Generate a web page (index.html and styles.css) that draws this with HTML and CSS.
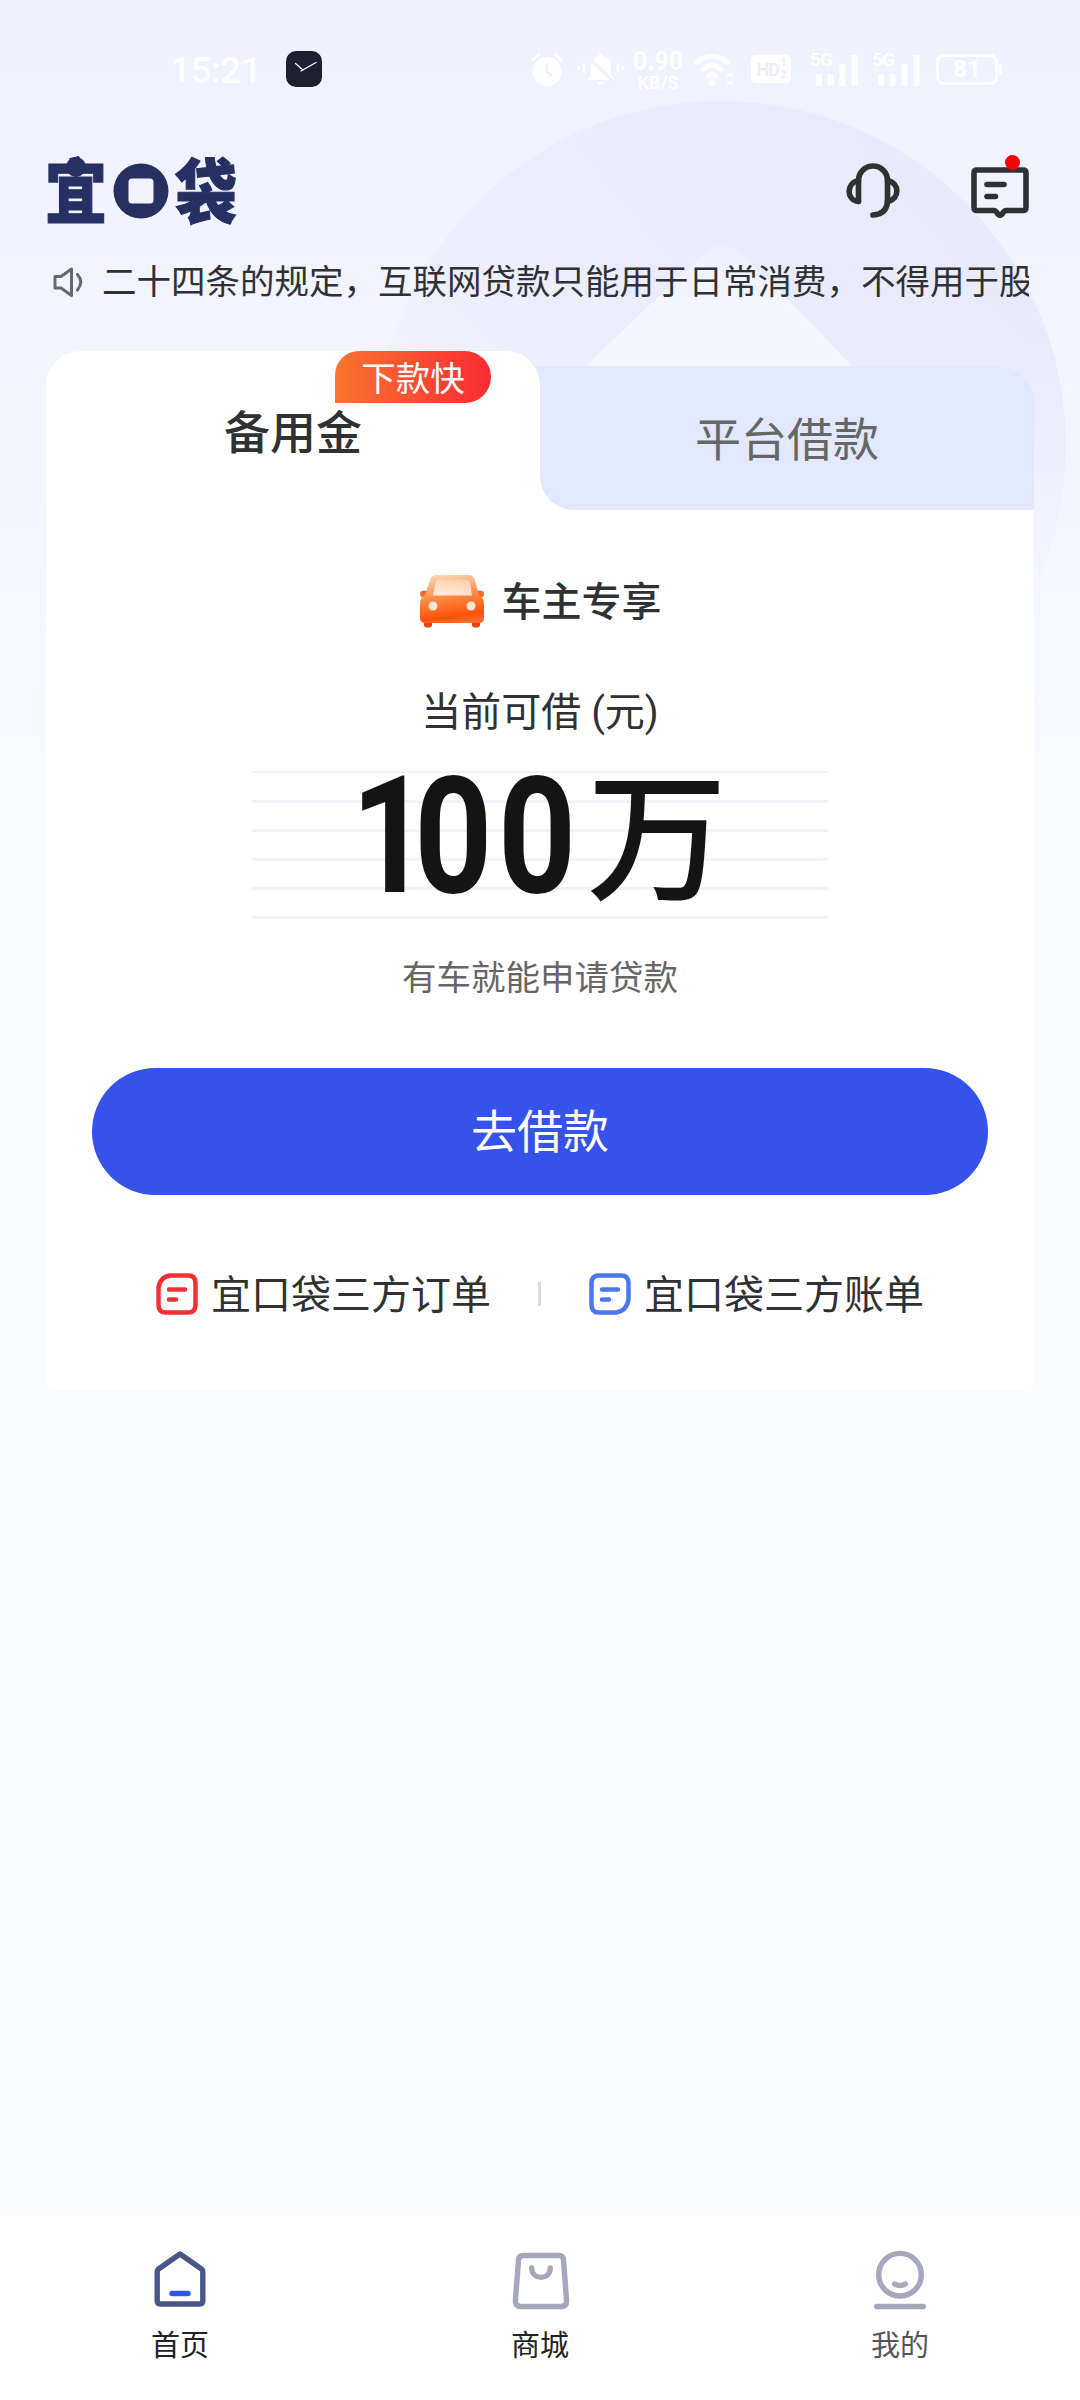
FILE: index.html
```html
<!DOCTYPE html>
<html lang="zh-CN">
<head>
<meta charset="utf-8">
<title>宜口袋</title>
<link rel="stylesheet" href="styles.css">
</head>
<body>
<div class="app">
  <svg class="backdrop" viewBox="0 0 1080 900" aria-hidden="true">
    <defs>
      <linearGradient id="disc" x1="0.75" y1="0.1" x2="0.15" y2="0.6">
        <stop offset="0" stop-color="#e9eafc"/><stop offset="0.5" stop-color="#ebecfd"/><stop offset="1" stop-color="#f1f3ff"/>
      </linearGradient>
      <linearGradient id="fade" x1="0" y1="0" x2="0" y2="1">
        <stop offset="0.35" stop-color="#f5f8ff" stop-opacity="0"/><stop offset="0.8" stop-color="#f5f8ff"/>
      </linearGradient>
      <linearGradient id="peak" x1="0" y1="0" x2="0" y2="1">
        <stop offset="0" stop-color="#eff0fe"/><stop offset="0.5" stop-color="#f3f5ff"/>
      </linearGradient>
    </defs>
    <circle cx="721" cy="446" r="345" fill="url(#disc)"/>
    <circle cx="721" cy="446" r="346" fill="url(#fade)"/>
    <path d="M704 254Q722 236 741 254Q790 300 852 366H586Q650 304 704 254Z" fill="url(#peak)"/>
  </svg>

  <header class="status">
    <span class="time">15:21</span>
    <svg class="watch" viewBox="0 0 36 36"><rect width="36" height="36" rx="10" fill="#1d2030"/><path d="M9.500 12.500L17 19M15 20L30 11.500" stroke="#fff" stroke-width="1.300" fill="none" stroke-linecap="round"/></svg>
    <div class="status-icons">
      <svg class="i-alarm" viewBox="0 0 32 34"><circle cx="16" cy="19.500" r="14.500" fill="#fff"/><path d="M2 8L8 2M30 8L24 2" stroke="#fff" stroke-width="3" stroke-linecap="round"/><path d="M16 12V19.500L20 23" stroke="#f0f1ff" stroke-width="2.500" fill="none" stroke-linecap="round"/></svg>
      <svg class="i-bell" viewBox="0 0 48 34"><path d="M24 1Q26 1 26 4Q34 6 34 15V23L38 28H10L14 23V15Q14 6 22 4Q22 1 24 1ZM20 30H28Q27 33 24 33Q21 33 20 30Z" fill="#fff"/><path d="M9 3L38 31" stroke="#f0f1ff" stroke-width="3"/><path d="M2 15V17M7 12V20M41 12V20M46 15V17" stroke="#fff" stroke-width="2.500" stroke-linecap="round"/></svg>
      <div class="speed"><b>0.90</b><small>KB/S</small></div>
      <svg class="i-wifi" viewBox="0 0 44 34"><path d="M3 12Q20-4 37 12M9 19Q20 8 31 19M14.500 25.500Q20 20 25.500 25.500" stroke="#fff" stroke-width="4.500" fill="none"/><circle cx="20" cy="30.500" r="3.500" fill="#fff"/><path d="M34 25L38 20L42 25ZM34 29L38 34L42 29Z" fill="#fff"/></svg>
      <div class="hd"><span>HD</span><span class="sim"><i>1</i><i>2</i></span></div>
      <div class="signal"><span>5G</span><svg viewBox="0 0 46 34"><path d="M7 22V34M18.500 22V34M30.500 12V34M42.500 3V34" stroke="#fff" stroke-width="6"/></svg></div>
      <div class="signal"><span>5G</span><svg viewBox="0 0 46 34"><path d="M7 22V34M18.500 22V34M30.500 12V34M42.500 3V34" stroke="#fff" stroke-width="6"/></svg></div>
      <div class="battery"><span>81</span></div>
    </div>
  </header>

  <div class="topbar">
    <div class="logo">
      <span class="logo-char">宜</span>
      <i class="head"></i>
      <svg class="coin" viewBox="0 0 56 56"><path fill-rule="evenodd" fill="#263063" d="M28 0.500A27.500 27.500 0 1 1 28 55.500A27.500 27.500 0 1 1 28 0.500ZM19 15.500Q15.500 15.500 15.500 19V37Q15.500 40.500 19 40.500H37Q40.500 40.500 40.500 37V19Q40.500 15.500 37 15.500Z"/></svg>
      <span class="logo-char">袋</span>
    </div>
    <div class="actions">
      <svg class="i-headset" viewBox="0 0 54 56" fill="none" stroke="#303133" stroke-width="5.600" stroke-linecap="round" stroke-linejoin="round"><path d="M12.500 38.500V17.500A14.500 14.500 0 0 1 41.500 17.500V37Q41.500 51 27 52"/><path d="M12.500 17.500C0 20 0 37 12.500 38.500M41.500 17.500C54 20 54 36 41.500 38.500"/></svg>
      <div class="message">
        <svg viewBox="0 0 58 52" fill="none" stroke="#303133" stroke-width="5.600" stroke-linecap="round" stroke-linejoin="round"><path d="M6 3H52Q55 3 55 6V40.500Q55 43.500 52 43.500H35Q33.500 43.500 32.500 45L31 47.200Q29 49.500 27 47.200L25.500 45Q24.500 43.500 23 43.500H6Q3 43.500 3 40.500V6Q3 3 6 3Z"/><path d="M16 17.500H33M16 29.500H24.500"/></svg>
        <i class="dot"></i>
      </div>
    </div>
  </div>

  <div class="notice">
    <svg viewBox="0 0 30 30" fill="none" stroke="#66686c" stroke-width="3" stroke-linejoin="round" stroke-linecap="round"><path d="M2 9.500H8L18.500 2V28.500L8 21H2Z"/><path d="M24.500 7.500Q31 15 24.500 23"/></svg>
    <p>二十四条的规定，互联网贷款只能用于日常消费，不得用于股票</p>
  </div>

  <main class="card">
    <div class="tabs">
      <div class="tab active"><span>备用金</span><em class="badge">下款快</em></div>
      <div class="tab-rest"><div class="tab idle">平台借款</div></div>
    </div>
    <section class="offer">
      <div class="owner">
        <svg viewBox="0 0 66 54">
          <defs>
            <linearGradient id="car" x1="0.4" y1="0" x2="0.6" y2="1"><stop offset="0" stop-color="#fad3ad"/><stop offset="0.45" stop-color="#f98a45"/><stop offset="0.85" stop-color="#ff5208"/><stop offset="1" stop-color="#ff6a2a"/></linearGradient>
            <linearGradient id="glass" x1="0.8" y1="0" x2="0.3" y2="1"><stop offset="0" stop-color="#fbd0ac"/><stop offset="1" stop-color="#ffeadb"/></linearGradient>
          </defs>
          <rect x="5" y="44" width="8" height="9.500" rx="3" fill="#d9480f"/><rect x="53" y="44" width="8" height="9.500" rx="3" fill="#d9480f"/>
          <ellipse cx="5" cy="20" rx="4" ry="3.500" fill="#ee6c2b"/><ellipse cx="61" cy="20" rx="4" ry="3.500" fill="#ee6c2b"/>
          <path d="M17 1H50Q54 1 55.500 5L60 21Q65 24 65 30V44Q65 49 60 49H6Q1 49 1 44V30Q1 24 6 21L11.500 5Q13 1 17 1Z" fill="url(#car)"/>
          <path d="M20 5.500H47Q50 5.500 51 9L53 21.500H14L16.500 9Q17.500 5.500 20 5.500Z" fill="url(#glass)"/>
          <circle cx="14" cy="32" r="4.500" fill="#ffe3d3"/><circle cx="52" cy="32" r="4.500" fill="#ffe3d3"/>
        </svg>
        <strong>车主专享</strong>
      </div>
      <p class="caption">当前可借 (元)</p>
      <div class="amount"><span class="digits"><span class="one">1</span>00</span><span class="unit">万</span></div>
      <p class="hint">有车就能申请贷款</p>
      <button class="borrow" type="button">去借款</button>
      <div class="links">
        <a class="link"><svg viewBox="0 0 42 42" fill="none" stroke="#f52f35" stroke-width="4.500" stroke-linecap="round"><path d="M14 2.500H32Q39.500 2.500 39.500 10V32Q39.500 39.500 32 39.500H10Q2.500 39.500 2.500 32V15Q4 4 14 2.500Z"/><path d="M13 16.500H29M13 26.500H20"/></svg><span>宜口袋三方订单</span></a>
        <i class="split"></i>
        <a class="link"><svg viewBox="0 0 42 42" fill="none" stroke="#4c75ee" stroke-width="4.500" stroke-linecap="round"><path d="M10 2.500H32Q39.500 2.500 39.500 10V26Q38 38 27 39.500H10Q2.500 39.500 2.500 32V10Q2.500 2.500 10 2.500Z"/><path d="M13 16.500H29M13 26.500H20"/></svg><span>宜口袋三方账单</span></a>
      </div>
    </section>
  </main>

  <nav class="nav">
    <a class="nav-item"><svg viewBox="0 0 60 60" fill="none" stroke-width="5.400" stroke-linejoin="round" stroke-linecap="round"><path d="M30 4L51.500 19Q52.800 20 52.800 22V51Q52.800 54 49.800 54H10.200Q7.200 54 7.200 51V22Q7.200 20 8.500 19Z" stroke="#485688"/><path d="M22 43.500H38" stroke="#2f55f2"/></svg>首页</a>
    <a class="nav-item"><svg viewBox="0 0 60 60" fill="none" stroke="#a5a8bd" stroke-width="5.400" stroke-linejoin="round" stroke-linecap="round"><path d="M13 5.500H49Q53 5.500 53.500 10L56.600 51Q56.600 56.500 51.500 56.500H10.500Q5.400 56.500 5.400 51L8.500 10Q9 5.500 13 5.500Z"/><path d="M21.700 18C22 30.500 40 30.500 40.300 18"/></svg>商城</a>
    <a class="nav-item muted"><svg viewBox="0 0 60 60" fill="none" stroke="#a5a8bd" stroke-width="5.400" stroke-linecap="round"><circle cx="30" cy="24.700" r="21.300"/><path d="M24.700 34Q30 37 35.300 34M6.700 56.500H53.300"/></svg>我的</a>
  </nav>
</div>
</body>
</html>
```
FILE: styles.css
```css
* { box-sizing: border-box; margin: 0; padding: 0; }
body {
  width: 1080px;
  height: 2400px;
  overflow: hidden;
  font-family: Roboto, "Noto Sans CJK SC", sans-serif;
  color: #303133;
}
i, em { font-style: normal; }
svg { display: block; flex: none; }
.app {
  position: relative;
  display: flex;
  flex-direction: column;
  width: 1080px;
  height: 2400px;
  background: linear-gradient(#f0f1ff 0, #f1f3ff 240px, #f5f7ff 560px, #fafbff 900px);
}
.backdrop { position: absolute; left: 0; top: 0; width: 1080px; height: 900px; }
.status, .topbar, .notice, .card, .nav { position: relative; }

/* status bar */
.status {
  display: flex;
  align-items: center;
  height: 138px;
  padding: 0 82px 0 170px;
  color: #fff;
}
.time { width: 116px; padding-top: 2px; font-size: 37px; font-weight: 500; letter-spacing: -0.5px; }
.watch { width: 36px; height: 36px; }
.status-icons { flex: 1; display: flex; align-items: center; justify-content: flex-end; }
.i-alarm { width: 32px; height: 34px; margin-right: 14px; }
.i-bell { width: 48px; height: 34px; margin-right: 7px; }
.speed { display: flex; flex-direction: column; align-items: center; width: 52px; margin-right: 8px; padding-top: 4px; }
.speed b { font-size: 25px; line-height: 22px; font-weight: 700; }
.speed small { font-size: 18px; line-height: 19px; font-weight: 500; }
.i-wifi { width: 44px; height: 34px; margin-right: 15px; }
.hd {
  display: flex; align-items: center; justify-content: center;
  width: 40px; height: 28px; margin-right: 21px;
  border-radius: 5px; background: #fff; color: #ecedfb;
  font-size: 18px; font-weight: 700; letter-spacing: -1px;
}
.sim { display: flex; flex-direction: column; margin-left: 2px; font-size: 10px; line-height: 12px; }
.signal { position: relative; width: 46px; height: 34px; margin-right: 16px; }
.signal svg { width: 46px; height: 34px; }
.signal span { position: absolute; left: -2px; top: -2px; font-size: 19px; line-height: 20px; font-weight: 700; letter-spacing: -1px; }
.battery {
  position: relative;
  display: flex; align-items: center; justify-content: center;
  width: 62px; height: 31px;
  border: 3px solid #fff; border-radius: 8px;
  font-size: 24px; font-weight: 700;
}
.battery::after { content: ""; position: absolute; right: -7px; top: 7px; width: 3px; height: 11px; border-radius: 2px; background: #fff; }

/* logo and actions */
.topbar {
  display: flex;
  align-items: center;
  justify-content: space-between;
  height: 106px;
  padding: 0 51px 0 45px;
}
.logo { position: relative; display: flex; align-items: center; gap: 6px; height: 70px; color: #263063; }
.logo-char {
  width: 62px;
  font-family: "Noto Sans CJK SC", sans-serif;
  font-size: 62px;
  line-height: 62px;
  font-weight: 900;
  -webkit-text-stroke: 1px #263063;
  transform: translateY(-4px) scaleY(1.14);
}
.head { position: absolute; left: 21px; top: 1px; width: 20px; height: 20px; border-radius: 50%; background: #263063; }
.coin { width: 56px; height: 56px; margin-bottom: 1px; }
.actions { display: flex; align-items: center; gap: 71px; }
.i-headset { width: 54px; height: 56px; }
.message { position: relative; padding-top: 4px; }
.message svg { width: 58px; height: 52px; }
.dot { position: absolute; left: 34px; top: -8px; width: 15px; height: 15px; border-radius: 50%; background: #f80208; }

/* scrolling notice */
.notice { display: flex; align-items: center; height: 76px; padding: 0 51px 0 53px; }
.notice svg { width: 30px; height: 30px; margin-right: 19px; }
.notice p { flex: 1; overflow: hidden; white-space: nowrap; font-size: 34.5px; line-height: 50px; }

/* product card */
.card { width: 988px; height: 1039px; margin: 31px 46px 0; }
.tabs { display: flex; align-items: flex-end; height: 159px; }
.tab { display: flex; justify-content: center; font-size: 46px; line-height: 60px; }
.tab.active { position: relative; width: 494px; height: 159px; padding-top: 52px; border-radius: 34px 34px 0 0; background: #fff; font-weight: 500; }
.tab-rest { position: relative; width: 494px; height: 144px; background: #fff; border-radius: 0 34px 0 0; }
.tab.idle { height: 144px; padding-top: 44px; border-radius: 0 34px 0 34px; background: #e2e8fe; color: #666; }
.tabs::before { content: ""; position: absolute; left: 480px; top: 15px; width: 40px; height: 60px; background: #e2e8fe; }
.badge {
  position: absolute; left: 289px; top: 0;
  width: 156px; height: 52px; line-height: 56px;
  border-radius: 24px 26px 26px 0;
  background: linear-gradient(90deg, #f9752f, #fa2b34);
  color: #fff; text-align: center; font-size: 34.5px; font-weight: 400;
}
.offer {
  display: flex; flex-direction: column; align-items: center;
  height: 880px; padding-top: 60px;
  border-radius: 0 0 10px 10px; background: #fff;
}
.owner { display: flex; align-items: center; gap: 17px; height: 62px; }
.owner svg { width: 66px; height: 54px; }
.owner strong { padding-top: 3px; font-size: 40px; line-height: 60px; font-weight: 500; }
.caption { margin-top: 51px; font-size: 40px; line-height: 60px; }
.amount {
  display: flex; align-items: center;
  width: 576px; height: 148px; margin-top: 28px; padding-left: 99px;
  background: repeating-linear-gradient(#f2f2fb 0 2.5px, transparent 2.5px 29.1px);
  color: #141414;
}
.digits {
  width: 236px; margin-top: -19px;
  font-size: 164px; line-height: 148px; font-weight: 700; letter-spacing: 7px;
  transform: scaleX(0.83); transform-origin: 0 50%;
}
.one { letter-spacing: -18px; }
.unit { margin-top: -8px; font-size: 140px; line-height: 148px; font-weight: 500; }
.hint { margin-top: 33px; color: #666; font-size: 34.5px; line-height: 52px; }
.borrow {
  width: 896px; height: 127px; margin-top: 64px;
  border: 0; border-radius: 64px; background: #3552ea; color: #fff;
  font: 400 46px/60px Roboto, "Noto Sans CJK SC", sans-serif;
}
.links { display: flex; align-items: center; height: 60px; margin-top: 69px; }
.link { display: flex; align-items: center; gap: 13px; font-size: 40px; line-height: 60px; }
.link span { padding-top: 3px; }
.link svg { width: 42px; height: 42px; }
.split { width: 3px; height: 24px; margin: 0 48px 0 47px; background: #dcdcdc; }

/* bottom navigation */
.nav { display: flex; height: 184px; margin-top: auto; background: #fff; }
.nav-item { flex: 1; display: flex; flex-direction: column; align-items: center; padding-top: 34px; font-size: 29px; line-height: 40px; gap: 16px; color: #222; }
.nav-item svg { width: 60px; height: 60px; }
.nav-item.muted { color: #555; }
```
